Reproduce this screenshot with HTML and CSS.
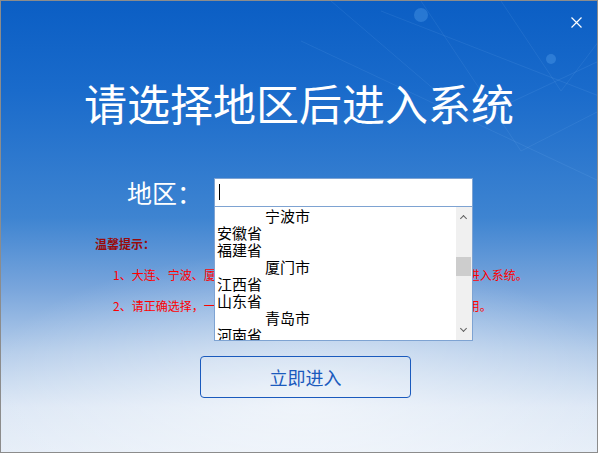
FILE: index.html
```html
<!DOCTYPE html>
<html lang="zh-CN">
<head>
    <meta charset="UTF-8">
    <title>选择地区</title>
    <link rel="stylesheet" href="styles.css">
</head>
<body>
<div class="window">
    <svg class="bg-lines" width="598" height="453" viewBox="0 0 598 453">
        <path d="M330 0 L470 120 L598 60" />
        <path d="M380 10 L598 95" />
        <path d="M420 0 L520 150 L598 110" />
        <path d="M500 0 L560 90 L598 40" />
        <path d="M300 40 L598 180" />
        <circle cx="420" cy="14" r="7" />
        <circle cx="550" cy="58" r="5" />
    </svg>

    <a href="#" class="close-btn" onclick="closeWindow()">
        <svg width="11" height="11" viewBox="0 0 11 11">
            <path d="M0.5 0.5 L10.5 10.5 M10.5 0.5 L0.5 10.5" />
        </svg>
    </a>

    <h1 class="title">请选择地区后进入系统</h1>

    <div class="area-row">
        <span class="area-label">地区：</span>
        <div class="combo">
            <div class="combo-input"><span class="caret"></span></div>
            <div class="combo-list">
                <ul class="combo-items">
                    <li class="city">宁波市</li>
                    <li>安徽省</li>
                    <li>福建省</li>
                    <li class="city">厦门市</li>
                    <li>江西省</li>
                    <li>山东省</li>
                    <li class="city">青岛市</li>
                    <li>河南省</li>
                </ul>
                <div class="scrollbar">
                    <span class="arrow arrow-up"></span>
                    <span class="thumb"></span>
                    <span class="arrow arrow-down"></span>
                </div>
            </div>
        </div>
    </div>

    <div class="tips">
        <p class="tips-title">温馨提示：</p>
        <p class="tips-line">1、大连、宁波、厦门、青岛、深圳为计划单列市，请选择所在城市进入系统。</p>
        <p class="tips-line">2、请正确选择，一旦选择错误，将会导致系统部分功能无法正常使用。</p>
    </div>

    <div class="actions">
        <button class="enter-btn" onclick="enterSystem()">立即进入</button>
    </div>
</div>

<script>
    // Function to close the window
    function closeWindow() {
        window.close();
    }

    // Function to enter the system
    function enterSystem() {
        window.location.href = "index.html";
    }
</script>
</body>
</html>
```

FILE: styles.css
```css
body {
    margin: 0;
    padding: 0;
    font-family: "Noto Sans CJK SC", "Noto Sans", sans-serif;
}

.window {
    position: relative;
    width: 598px;
    height: 453px;
    box-sizing: border-box;
    border: 1px solid #8c8c8c;
    overflow: hidden;
    background:
        radial-gradient(ellipse 330px 150px at 300px 400px, rgba(255, 255, 255, 0.55), rgba(255, 255, 255, 0) 100%),
        linear-gradient(to bottom, #0b5ec4 0%, #1a6bcb 20%, #3e84d1 48%, #7aa6dc 64%, #b5cdea 78%, #dce7f5 90%, #e6eef8 100%);
}

.bg-lines {
    position: absolute;
    left: 0;
    top: 0;
}

.bg-lines path {
    fill: none;
    stroke: rgba(160, 205, 255, 0.1);
    stroke-width: 1;
}

.bg-lines circle {
    fill: rgba(120, 190, 255, 0.25);
}

.close-btn {
    position: absolute;
    top: 16px;
    right: 15px;
    width: 11px;
    height: 11px;
}

.close-btn svg {
    display: block;
}

.close-btn path {
    stroke: #fff;
    stroke-width: 1.2;
    fill: none;
}

.title {
    margin: 0;
    padding-top: 73px;
    text-align: center;
    font-size: 43px;
    line-height: 56px;
    font-weight: 400;
    color: #fff;
}

.area-row {
    display: flex;
    align-items: center;
    margin-top: 48px;
    padding-left: 126px;
}

.area-label {
    width: 87px;
    font-size: 25px;
    line-height: 29px;
    color: #fff;
}

.combo {
    position: relative;
    width: 259px;
}

.combo-input {
    height: 27px;
    background-color: #fff;
    border: 1px solid #7ea3d2;
}

.caret {
    display: block;
    margin: 5px 0 0 4px;
    width: 1px;
    height: 16px;
    background-color: #000;
}

.combo-list {
    position: absolute;
    top: 28px;
    left: 0;
    width: 257px;
    height: 133px;
    background-color: #fff;
    border: 1px solid #7ea3d2;
    display: flex;
    z-index: 2;
}

.combo-items {
    flex: 1;
    list-style-type: none;
    margin: 0;
    padding: 0 0 0 2px;
    overflow: hidden;
    font-size: 15px;
    line-height: 17px;
    color: #000;
}

.combo-items li {
    white-space: nowrap;
}

.combo-items .city {
    padding-left: 48px;
}

.scrollbar {
    position: relative;
    width: 16px;
    background-color: #f0f0f0;
}

.thumb {
    position: absolute;
    left: 0;
    top: 50px;
    width: 15px;
    height: 19px;
    background-color: #cdcdcd;
}

.arrow {
    position: absolute;
    left: 5px;
    width: 4px;
    height: 4px;
    border-left: 1.5px solid #606060;
    border-top: 1.5px solid #606060;
}

.arrow-up {
    top: 9px;
    transform: rotate(45deg);
}

.arrow-down {
    bottom: 9px;
    transform: rotate(225deg);
}

.tips {
    margin-top: 29px;
    padding-left: 94px;
}

.tips p {
    margin: 0;
    font-size: 12px;
    line-height: 16px;
    white-space: nowrap;
}

.tips-title {
    color: #9a0a0a;
    font-weight: bold;
}

.tips-line {
    color: #ff0000;
    padding-left: 18px;
    margin-top: 15px !important;
}

.actions {
    margin-top: 42px;
    padding-left: 199px;
}

.enter-btn {
    width: 211px;
    height: 42px;
    padding: 0;
    background-color: rgba(255, 255, 255, 0.12);
    border: 1px solid #1a5abd;
    border-radius: 4px;
    font-family: "Noto Sans CJK SC", "Noto Sans", sans-serif;
    font-size: 18px;
    color: #1a5abd;
    cursor: pointer;
}
```
